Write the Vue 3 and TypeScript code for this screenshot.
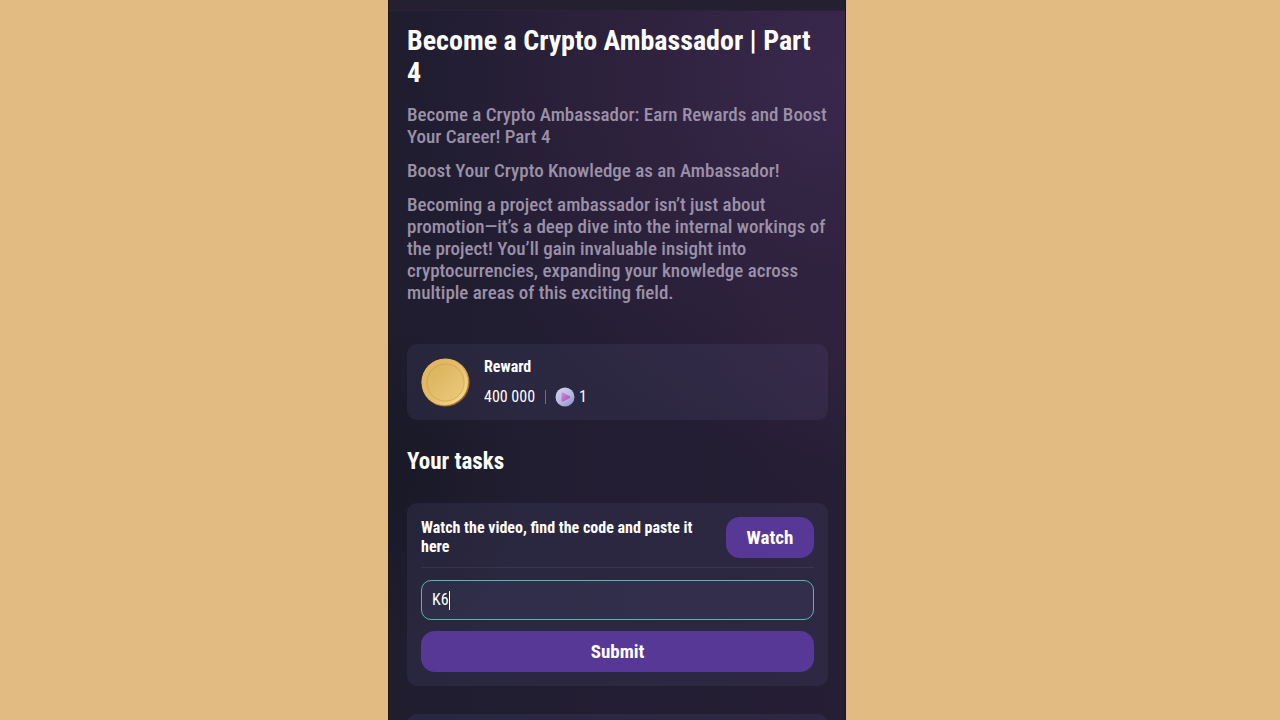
<script setup lang="ts">
import { ref } from 'vue'

const code = ref<string>('K6')
const codeInput = ref<HTMLInputElement | null>(null)

const paragraphs: string[] = [
  'Become a Crypto Ambassador: Earn Rewards and Boost Your Career! Part 4',
  'Boost Your Crypto Knowledge as an Ambassador!',
  'Becoming a project ambassador isn’t just about promotion—it’s a deep dive into the internal workings of the project! You’ll gain invaluable insight into cryptocurrencies, expanding your knowledge across multiple areas of this exciting field.',
]
</script>

<template>
  <div class="stage">
    <main class="phone">
      <div class="topbar"></div>
      <div class="content">
        <h1>Become a Crypto Ambassador | Part 4</h1>
        <div class="intro">
          <p v-for="text in paragraphs" :key="text">{{ text }}</p>
        </div>

        <section class="card reward">
          <svg class="coin" viewBox="0 0 50 50" aria-hidden="true">
            <defs>
              <linearGradient id="rim" x1="0" y1="0" x2="1" y2="1">
                <stop offset="0" stop-color="#e9bd62" />
                <stop offset="0.6" stop-color="#d3a14b" />
                <stop offset="0.86" stop-color="#8f6023" />
                <stop offset="1" stop-color="#c9974a" />
              </linearGradient>
              <linearGradient id="face" x1="0" y1="0.1" x2="1" y2="0.9">
                <stop offset="0" stop-color="#dfb45c" />
                <stop offset="0.5" stop-color="#e4bd68" />
                <stop offset="1" stop-color="#f6dc92" />
              </linearGradient>
              <linearGradient id="inner" x1="0" y1="0" x2="1" y2="1">
                <stop offset="0" stop-color="#dbb05a" />
                <stop offset="1" stop-color="#ecca7c" />
              </linearGradient>
            </defs>
            <circle cx="25" cy="25" r="24.5" fill="url(#rim)" />
            <circle cx="24.3" cy="24.6" r="23.6" fill="url(#face)" />
            <circle cx="25" cy="25" r="19" fill="url(#inner)" stroke="#c39a4c" stroke-width="0.6" />
          </svg>
          <div class="reward-text">
            <h2>Reward</h2>
            <div class="amounts">
              <span>400 000</span>
              <span class="bar"></span>
              <svg class="token" viewBox="0 0 20 20" aria-hidden="true">
                <defs>
                  <linearGradient id="orb" x1="0" y1="0" x2="0.8" y2="1">
                    <stop offset="0" stop-color="#d3d6ee" />
                    <stop offset="0.6" stop-color="#b9b9e0" />
                    <stop offset="1" stop-color="#8f93cb" />
                  </linearGradient>
                  <linearGradient id="play" x1="0" y1="0" x2="1" y2="1">
                    <stop offset="0" stop-color="#d58be0" />
                    <stop offset="1" stop-color="#9a4dbb" />
                  </linearGradient>
                </defs>
                <circle cx="10" cy="10" r="9.5" fill="url(#orb)" />
                <path d="M6.6 6.1Q6.8 5.2 7.8 5.5L14.9 9.2Q15.8 10 14.9 10.9L7.6 14.7Q6.4 15 6.5 13.8Z" fill="url(#play)" />
              </svg>
              <span>1</span>
            </div>
          </div>
        </section>

        <h2 class="section-title">Your tasks</h2>

        <form class="card task" @submit.prevent>
          <div class="task-head">
            <label for="code">Watch the video, find the code and paste it here</label>
            <button type="button" class="btn watch">Watch</button>
          </div>
          <div class="field" @click="codeInput?.focus()">
            <input id="code" ref="codeInput" v-model="code" type="text" autocomplete="off" />
            <span class="caret"></span>
          </div>
          <button type="submit" class="btn submit">Submit</button>
        </form>

        <section class="card next"></section>
      </div>
    </main>
  </div>
</template>

<style>
body {
  background: #e2bb82;
}
</style>

<style scoped>
.stage {
  display: grid;
  grid-template-columns: minmax(0, 388fr) minmax(320px, 458px) minmax(0, 434fr);
  height: 100vh;
  overflow: hidden;
  background: #e2bb82;
  font-family: "Roboto Condensed", Roboto, sans-serif;
  color: #fff;
}
.phone {
  grid-column: 2;
  box-sizing: border-box;
  overflow: hidden;
  border: solid #1b1726;
  border-width: 0 1px;
  background:
    radial-gradient(ellipse 92% 54% at 100% 10%, rgba(60, 41, 80, 0.9), rgba(54, 37, 70, 0.6) 50%, rgba(46, 33, 58, 0) 100%),
    radial-gradient(ellipse 30% 24% at 100% 48%, rgba(50, 34, 62, 0.5), rgba(50, 34, 62, 0) 100%),
    radial-gradient(ellipse 30% 24% at 0% 66%, rgba(23, 24, 36, 0.8), rgba(23, 24, 36, 0) 100%),
    linear-gradient(90deg, #201d30, #251e34);
}
.topbar {
  height: 10px;
  background: #241f31;
  border-bottom: 1px solid #2b2339;
}
.content {
  padding: 14px 17px 0 18px;
}
h1,
h2,
p {
  margin: 0;
}
h1 {
  font-size: 28px;
  line-height: 32px;
  font-weight: 700;
}
.intro {
  display: grid;
  gap: 12px;
  margin: 15px 0 40px;
  font-size: 19px;
  line-height: 22px;
  font-weight: 500;
  color: #9b91a8;
}
.card {
  box-sizing: border-box;
  padding: 14px;
  border-radius: 10px;
  background: rgba(112, 112, 168, 0.13);
}
.reward {
  display: flex;
  align-items: center;
  gap: 14px;
  height: 76px;
}
.coin {
  width: 49px;
  height: 49px;
}
.reward h2 {
  font-size: 16px;
  line-height: 20px;
  font-weight: 700;
}
.amounts {
  display: flex;
  align-items: center;
  margin-top: 10px;
  font-size: 16px;
  line-height: 20px;
}
.bar {
  width: 1px;
  height: 14px;
  margin: 0 9px 0 10px;
  background: #746d7d;
}
.token {
  width: 20px;
  height: 20px;
  margin-right: 4px;
}
.section-title {
  margin: 28px 0 27px;
  font-size: 23px;
  line-height: 28px;
  font-weight: 700;
}
.task-head {
  display: flex;
  justify-content: space-between;
  gap: 16px;
  padding-bottom: 9px;
  border-bottom: 1px solid rgba(140, 128, 170, 0.15);
}
.task-head label {
  padding-top: 1px;
  font-size: 16px;
  line-height: 19px;
  font-weight: 700;
}
.btn {
  height: 41px;
  border: 0;
  border-radius: 14px;
  padding: 0;
  background: #573897;
  color: #fff;
  font-family: inherit;
  font-size: 19px;
  font-weight: 700;
}
.watch {
  flex: 0 0 88px;
}
.submit {
  display: block;
  width: 100%;
}
.field {
  display: flex;
  align-items: center;
  box-sizing: border-box;
  height: 40px;
  margin: 12px 0 11px;
  padding: 0 10px;
  border: 1px solid #4fb9ae;
  border-radius: 10px;
  background: rgba(112, 112, 168, 0.1);
}
.field input {
  field-sizing: content;
  min-width: 1px;
  padding: 0;
  border: 0;
  outline: 0;
  background: none;
  color: #fff;
  font-family: inherit;
  font-size: 16px;
  line-height: 20px;
  caret-color: transparent;
}
.caret {
  width: 1px;
  height: 19px;
  background: #fff;
}
.next {
  height: 60px;
  margin-top: 28px;
}
</style>
